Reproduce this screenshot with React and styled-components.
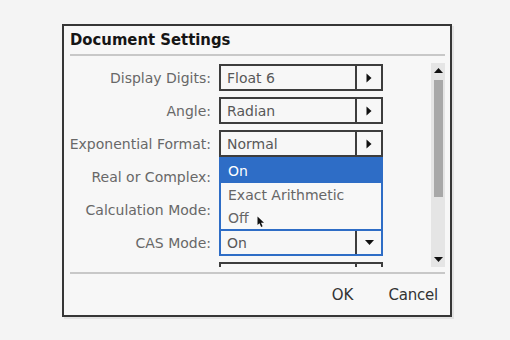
import React from "react";
import styled, { createGlobalStyle } from "styled-components";

const Global = createGlobalStyle`
  html, body { margin: 0; padding: 0; background: #f4f4f4; }
  body { font-family: "DejaVu Sans", "Liberation Sans", sans-serif; }
`;

const Page = styled.div`
  width: 510px;
  height: 340px;
  box-sizing: border-box;
  padding: 24px 0 0 62px;
`;

const Dialog = styled.div`
  width: 390px;
  height: 293px;
  box-sizing: border-box;
  border: 2px solid #363636;
  background: #f7f7f7;
  box-shadow: 2px 2px 0 #e2e2e2;
  display: flex;
  flex-direction: column;
`;

const Header = styled.div`
  height: 28px;
  margin: 0 5px 0 6px;
  border-bottom: 2px solid #c8c8c8;
  display: flex;
  align-items: center;
`;

const Title = styled.h1`
  margin: 0;
  font-family: "DejaVu Sans Condensed", "DejaVu Sans", sans-serif;
  font-stretch: condensed;
  font-weight: bold;
  font-size: 16.5px;
  color: #151515;
  line-height: 1;
  padding-top: 1px;
`;

const Body = styled.div`
  height: 216px;
  display: flex;
  align-items: flex-start;
`;

const Viewport = styled.div`
  flex: 1;
  height: 211px;
  box-sizing: border-box;
  overflow: hidden;
  padding-top: 8px;
`;

const Form = styled.div`
  display: grid;
  grid-template-columns: 147px 164px;
  column-gap: 8px;
  row-gap: 6px;
  grid-auto-rows: 27px;
`;

const Label = styled.div`
  font-size: 14px;
  color: #686868;
  text-align: right;
  display: flex;
  align-items: center;
  justify-content: flex-end;
  white-space: nowrap;
`;

const Select = styled.div`
  position: relative;
  display: flex;
  box-sizing: border-box;
  height: 27px;
  border: 2px solid ${(p) => (p.$open ? "#2e6dc6" : "#3d3d3d")};
  background: #f7f7f7;
`;

const Value = styled.div`
  flex: 1;
  padding-left: 6px;
  font-size: 14px;
  color: #575757;
  display: flex;
  align-items: center;
`;

const ArrowCell = styled.div`
  width: 24px;
  border-left: 2px solid #3d3d3d;
  display: flex;
  align-items: center;
  justify-content: center;
`;

const Popup = styled.div`
  position: absolute;
  left: -2px;
  right: -2px;
  bottom: calc(100% + 2px);
  height: 72px;
  box-sizing: border-box;
  border: 2px solid #2e6dc6;
  border-bottom: none;
  background: #f8f8f8;
  display: flex;
  flex-direction: column;
  z-index: 2;
`;

const Option = styled.div`
  height: ${(p) => (p.$selected ? "24px" : "23px")};
  margin-top: ${(p) => (p.$selected ? "-2px" : "0")};
  padding-top: ${(p) => (p.$selected ? "2px" : "0")};
  margin-left: ${(p) => (p.$selected ? "-2px" : "0")};
  margin-right: ${(p) => (p.$selected ? "-2px" : "0")};
  padding-left: ${(p) => (p.$selected ? "9px" : "7px")};
  background: ${(p) => (p.$selected ? "#2e6dc6" : "transparent")};
  color: ${(p) => (p.$selected ? "#ffffff" : "#666")};
  font-size: 14px;
  display: flex;
  align-items: center;
  position: relative;
`;

const Cursor = styled.svg`
  position: absolute;
  left: 36px;
  top: 10px;
`;

const Scrollbar = styled.div`
  width: 14px;
  height: 204px;
  margin: 7px 5px 0 0;
  background: #e5e5e5;
  display: flex;
  flex-direction: column;
  align-items: center;
`;

const ScrollBtn = styled.div`
  height: 15px;
  width: 100%;
  display: flex;
  align-items: center;
  justify-content: center;
`;

const Thumb = styled.div`
  width: 9px;
  height: 117px;
  margin-top: 2px;
  margin-left: 1px;
  background: #a8a8a8;
`;

const Spacer = styled.div`
  flex: 1;
`;

const Footer = styled.div`
  flex: 1;
  margin: 0 5px 0 6px;
  border-top: 2px solid #c8c8c8;
  display: flex;
  align-items: center;
  justify-content: flex-end;
  gap: 35px;
  padding-right: 7px;
`;

const Button = styled.button`
  border: none;
  background: none;
  padding: 0;
  font-family: "DejaVu Sans", sans-serif;
  font-size: 15px;
  color: #333;
  letter-spacing: ${(p) => (p.$tight ? "-0.2px" : "0")};
`;

const RightArrow = () => (
  <svg width="6" height="10" viewBox="0 0 6 10">
    <path d="M0.5 0.5 L5.5 5 L0.5 9.5 Z" fill="#111" />
  </svg>
);

const DownArrow = () => (
  <svg width="9" height="5" viewBox="0 0 9 5">
    <path d="M0 0 L9 0 L4.5 5 Z" fill="#111" />
  </svg>
);

const UpArrow = () => (
  <svg width="9" height="5" viewBox="0 0 9 5">
    <path d="M0 5 L9 5 L4.5 0 Z" fill="#111" />
  </svg>
);

/* rows hidden behind the open list or scrolled below the fold show no text */
const rows = [
  { label: "Display Digits:", value: "Float 6" },
  { label: "Angle:", value: "Radian" },
  { label: "Exponential Format:", value: "Normal" },
  { label: "Real or Complex:", value: "" },
  { label: "Calculation Mode:", value: "" },
  { label: "CAS Mode:", value: "On", open: true },
  { label: "", value: "" },
];

export default function App() {
  return (
    <>
      <Global />
      <Page>
        <Dialog>
          <Header>
            <Title>Document Settings</Title>
          </Header>
          <Body>
            <Viewport>
              <Form>
                {rows.map((r, i) => (
                  <React.Fragment key={i}>
                    <Label>{r.label}</Label>
                    <Select $open={r.open}>
                      <Value>{r.value}</Value>
                      <ArrowCell>{r.open ? <DownArrow /> : <RightArrow />}</ArrowCell>
                      {r.open && (
                        <Popup>
                          <Option $selected>On</Option>
                          <Option>Exact Arithmetic</Option>
                          <Option>
                            Off
                            <Cursor width="8" height="12" viewBox="0 0 8 12">
                              <path d="M0.5 0.5 L0.5 9 L2.5 7.2 L4.2 11 L5.6 10.3 L4 6.8 L7 6.8 Z" fill="#111" />
                            </Cursor>
                          </Option>
                        </Popup>
                      )}
                    </Select>
                  </React.Fragment>
                ))}
              </Form>
            </Viewport>
            <Scrollbar>
              <ScrollBtn><UpArrow /></ScrollBtn>
              <Thumb />
              <Spacer />
              <ScrollBtn><DownArrow /></ScrollBtn>
            </Scrollbar>
          </Body>
          <Footer>
            <Button>OK</Button>
            <Button $tight>Cancel</Button>
          </Footer>
        </Dialog>
      </Page>
    </>
  );
}
